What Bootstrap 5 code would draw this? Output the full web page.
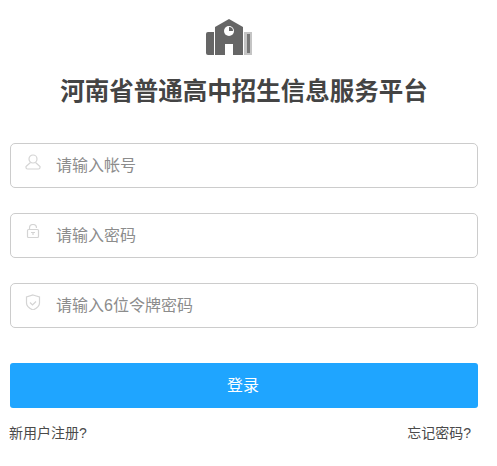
<!DOCTYPE html>
<html lang="zh-CN">
<head>
    <meta charset="UTF-8">
    <meta name="viewport" content="width=device-width, initial-scale=1.0">
    <title>河南省普通高中招生信息服务平台</title>
    <link href="https://cdn.jsdelivr.net/npm/bootstrap@5.3.0/dist/css/bootstrap.min.css" rel="stylesheet">
    <style>
        body {
            background: #fff;
            font-family: "Liberation Sans", "Noto Sans CJK SC", sans-serif;
            color: #333;
        }
        .login-wrap {
            width: 468px;
            margin-left: 10px;
            padding-top: 17px;
        }
        .school-logo {
            display: block;
            width: 48px;
            height: 40px;
            margin-left: 195px;
        }
        .site-title {
            font-size: 24.5px;
            font-weight: 700;
            line-height: 36px;
            color: #444;
            margin: 17px 0 33px;
        }
        .field-box {
            height: 45px;
            border: 1px solid #ccc;
            border-radius: 5px;
            margin-bottom: 25px;
            padding-left: 14px;
        }
        .field-icon {
            width: 16px;
            height: 16px;
            flex: none;
            margin-top: -7px;
        }
        .field-box input {
            border: 0;
            outline: 0;
            flex: 1;
            min-width: 0;
            margin-left: 13px;
            font-size: 16px;
            color: #333;
            background: transparent;
        }
        .field-box input::placeholder {
            color: #8c8c8c;
            opacity: 1;
        }
        .btn-login {
            display: block;
            width: 100%;
            height: 45px;
            margin-top: 35px;
            padding-right: 8px;
            background: #1fa5ff;
            border: 0;
            border-radius: 3px;
            color: #fff;
            font-size: 16px;
        }
        .foot-links {
            margin-top: 15px;
            margin-left: -1px;
            font-size: 14px;
            line-height: 20px;
        }
        .foot-links a {
            color: #4a4a4a;
            text-decoration: none;
        }
        .foot-links a:last-child {
            margin-right: 7px;
        }
    </style>
</head>
<body>
    <div class="login-wrap">
        <svg class="school-logo" viewBox="0 0 48 40">
            <path d="M1 17a2 2 0 0 1 2-2h6v23H3a2 2 0 0 1-2-2z" fill="#666"/>
            <path d="M10 10 24 2l14 8v28H28V27h-8v11H10z" fill="#666"/>
            <circle cx="24" cy="14" r="5" fill="#fff"/>
            <path d="M24 14v-4a4 4 0 0 1 4 4z" fill="#666"/>
            <rect x="39" y="15" width="8" height="23" fill="#c4c4c4"/>
            <rect x="42" y="17" width="3" height="19" fill="#777"/>
        </svg>
        <h1 class="site-title text-center">河南省普通高中招生信息服务平台</h1>

        <div class="field-box d-flex align-items-center">
            <svg class="field-icon" viewBox="0 0 16 16" fill="none" stroke="#d4d4d4" stroke-width="1.200">
                <circle cx="8" cy="5" r="4"/>
                <path d="M5.500 8.500 1 12.500v1a1.500 1.500 0 0 0 1.500 1.500h11a1.500 1.500 0 0 0 1.500-1.500v-1l-4.500-4"/>
            </svg>
            <input type="text" placeholder="请输入帐号">
        </div>
        <div class="field-box d-flex align-items-center">
            <svg class="field-icon" viewBox="0 0 16 16" fill="none" stroke="#d4d4d4" stroke-width="1.200">
                <path d="M4.500 5.500V4a3.500 3.500 0 0 1 7 0"/>
                <rect x="2.500" y="5.500" width="11" height="8" rx="1"/>
                <path d="M6 8.500h4M8 8.500v2.500"/>
            </svg>
            <input type="password" placeholder="请输入密码">
        </div>
        <div class="field-box d-flex align-items-center">
            <svg class="field-icon" viewBox="0 0 16 16" fill="none" stroke="#d4d4d4" stroke-width="1.200">
                <path d="M8 1 14.500 3v6c0 3.300-3 5.500-6.500 7-3.500-1.500-6.500-3.700-6.500-7V3z"/>
                <path d="M5 8.500 7.500 11 11 7.500"/>
            </svg>
            <input type="text" placeholder="请输入6位令牌密码">
        </div>

        <button class="btn-login" type="button">登录</button>
        <div class="foot-links d-flex justify-content-between">
            <a href="#">新用户注册?</a>
            <a href="#">忘记密码?</a>
        </div>
    </div>

    <script src="https://cdn.jsdelivr.net/npm/bootstrap@5.3.0/dist/js/bootstrap.bundle.min.js"></script>
</body>
</html>
